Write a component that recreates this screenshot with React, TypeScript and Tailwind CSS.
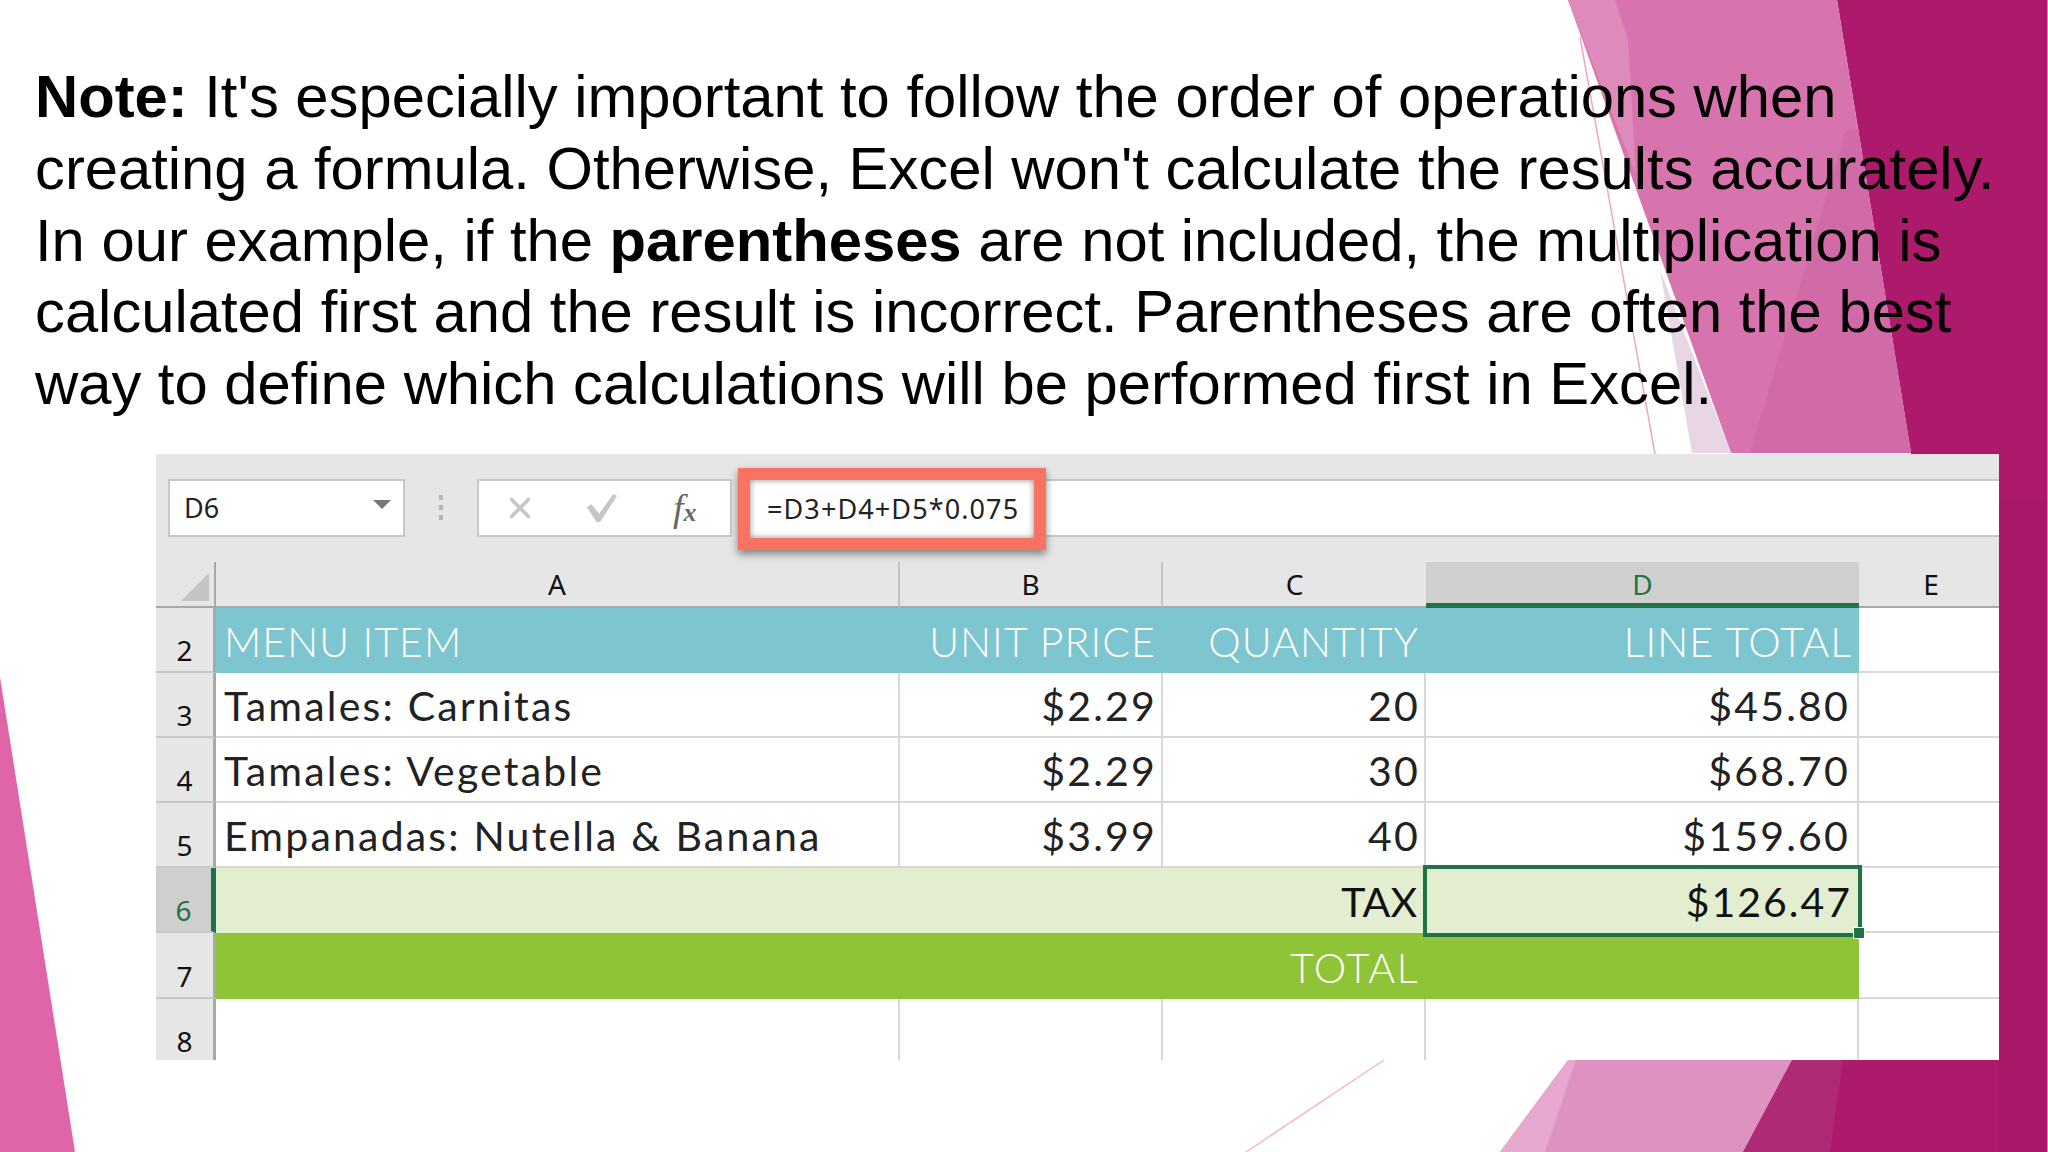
import React from 'react';
import { X } from 'lucide-react';

const headFont = "font-['Noto_Sans','Open_Sans',sans-serif]";
const cellFont = "font-['Lato',sans-serif]";

type Row = {
  n: number;
  kind: 'plain' | 'head' | 'tax' | 'total';
  cells: string[];
};

const rows: Row[] = [
  { n: 2, kind: 'head', cells: ['MENU ITEM', 'UNIT PRICE', 'QUANTITY', 'LINE TOTAL', ''] },
  { n: 3, kind: 'plain', cells: ['Tamales: Carnitas', '$2.29', '20', '$45.80', ''] },
  { n: 4, kind: 'plain', cells: ['Tamales: Vegetable', '$2.29', '30', '$68.70', ''] },
  { n: 5, kind: 'plain', cells: ['Empanadas: Nutella & Banana', '$3.99', '40', '$159.60', ''] },
  { n: 6, kind: 'tax', cells: ['', '', 'TAX', '$126.47', ''] },
  { n: 7, kind: 'total', cells: ['', '', 'TOTAL', '', ''] },
  { n: 8, kind: 'plain', cells: ['', '', '', '', ''] },
];

const columns = [
  { label: 'A', w: 'w-[684px]' },
  { label: 'B', w: 'w-[263px]' },
  { label: 'C', w: 'w-[263px]' },
  { label: 'D', w: 'w-[433px]' },
  { label: 'E', w: 'flex-1' },
];

function Backdrop() {
  return (
    <svg className="absolute inset-0" width="2048" height="1152" viewBox="0 0 2048 1152">
      <polygon points="0,677 75,1152 0,1152" fill="#e065a8" />
      <polygon points="1837,0 2048,0 2048,1152 1743,1152 1792,1060 1911,453" fill="#ad1a6c" />
      <polygon points="1999,500 2048,500 2048,1152 1999,1152" fill="#a91868" />
      <polygon points="1568,0 1837,0 1911,453 1731,453" fill="#d874ad" />
      <polygon points="1568,0 1615,0 1628,40 1636,175" fill="#de8aba" />
      <polygon points="1846,130 1750,453 1911,453 1858,130" fill="#d16ba8" />
      <polygon points="1660,270 1731,453 1692,453" fill="#e9d6e5" />
      <polygon points="1568,1060 1792,1060 1743,1152 1500,1152" fill="#de92bf" />
      <polygon points="1568,1060 1576,1060 1545,1152 1500,1152" fill="#e6a8cf" />
      <polygon points="1792,1060 1843,1060 1830,1152 1743,1152" fill="#ae2a75" />
      <line x1="1580" y1="37" x2="1655" y2="454" stroke="#f0a6c6" strokeWidth="1.5" />
      <line x1="1384" y1="1060" x2="1246" y2="1152" stroke="#f4b4cd" strokeWidth="1.5" />
      <line x1="2047.5" y1="0" x2="2047.5" y2="1152" stroke="#d884b0" strokeWidth="1" />
    </svg>
  );
}

function FormulaBar() {
  return (
    <div className="flex h-[108px] pt-[25px] items-start">
      <div className={`ml-[12px] w-[237px] h-[58px] bg-white border-2 border-[#c8c8c8] flex items-center justify-between pl-[14px] pr-[12px] text-[27px] text-[#222] ${headFont}`}>
        D6
        <span className="w-0 h-0 border-x-[9px] border-x-transparent border-t-[9px] border-t-[#777] -mt-[6px]" />
      </div>
      <div className="w-[72px] h-[58px] flex flex-col items-center justify-center gap-[5px]">
        <span className="w-[4px] h-[5px] bg-[#b5b5b5]" />
        <span className="w-[4px] h-[5px] bg-[#b5b5b5]" />
        <span className="w-[4px] h-[5px] bg-[#b5b5b5]" />
      </div>
      <div className="w-[255px] h-[58px] bg-white border-2 border-[#c8c8c8] flex items-center pl-[24px]">
        <X className="w-[34px] h-[34px] text-[#c6c6c6]" strokeWidth={2.5} />
        <svg className="ml-[49px]" width="32" height="30" viewBox="0 0 34 30">
          <polygon points="1,14 6,11 14,21 29,0 33,2 15,30 11,30" fill="#c6c6c6" />
        </svg>
        <span className="ml-[55px] leading-none italic text-[#666] font-['Liberation_Serif',serif] text-[38px]">
          f<span className="text-[26px] font-semibold">x</span>
        </span>
      </div>
      <div className="relative flex-1 ml-[6px] h-[58px] bg-white border-y-2 border-[#c8c8c8]">
        <div className={`absolute -top-[13px] left-0 w-[308px] h-[82px] bg-white border-[12px] border-[#f97362] shadow-[0_4px_8px_rgba(0,0,0,0.45),inset_0_0_6px_rgba(0,0,0,0.45)] flex items-center pl-[17px] text-[27px] tracking-[1.1px] text-[#222] ${headFont}`}>
          =D3+D4+D5*0.075
        </div>
      </div>
    </div>
  );
}

function ColumnHeaders() {
  return (
    <div className={`flex h-[46px] text-[28px] text-[#111] ${headFont}`}>
      <div className="w-[60px] relative border-b-2 border-r-2 border-[#a8a8a8]">
        <span className="absolute right-[5px] bottom-[5px] w-0 h-0 border-l-[28px] border-l-transparent border-b-[28px] border-b-[#c4c4c4]" />
      </div>
      {columns.map((c) => {
        const active = c.label === 'D';
        return (
          <div
            key={c.label}
            className={`${c.w} flex items-center justify-center ${
              active
                ? 'bg-[#cfcfcf] border-b-[5px] border-[#217346] text-[#217346] pt-[3px]'
                : 'border-b-2 border-[#a8a8a8]'
            } ${c.label === 'A' || c.label === 'B' ? 'border-r-2 border-r-[#c4c4c4]' : ''} ${c.label === 'E' ? 'pl-[4px]' : ''}`}
          >
            {c.label}
          </div>
        );
      })}
    </div>
  );
}

function cellPadding(kind: Row['kind'], label: string, text: string) {
  if (text === 'TAX') return 'pr-[9px]';
  if (kind === 'head' || kind === 'total') return 'pr-[7px]';
  return label === 'D' ? 'pr-[7px]' : 'pr-[4px]';
}

function SheetRow({ row, height }: { row: Row; height: string }) {
  const rowBg =
    row.kind === 'head' ? 'bg-[#7dc6d0] text-white font-light tracking-[1.1px]'
    : row.kind === 'tax' ? 'bg-[#e3eed0] text-[#111] tracking-[2px]'
    : row.kind === 'total' ? 'bg-[#8fc436] text-white font-light tracking-[1.5px]'
    : 'text-[#222] tracking-[2.2px]';
  const lines = row.kind === 'plain';
  const last = row.n === 8;
  return (
    <div className={`flex ${height}`}>
      <div
        className={`w-[60px] shrink-0 flex items-end justify-center text-[28px] leading-[30px] ${last ? 'pb-[8px]' : 'pb-[6px]'} ${headFont} ${
          last ? '' : 'border-b-2 border-b-[#c8c8c8]'
        } ${
          row.kind === 'tax'
            ? 'bg-[#cfcfcf] text-[#217346] border-r-[5px] border-r-[#217346]'
            : 'bg-[#e6e6e6] text-[#111] border-r-[3px] border-r-[#a8a8a8]'
        }`}
      >
        {row.n}
      </div>
      {columns.map((c, i) => {
        const isE = c.label === 'E';
        const text = row.cells[i];
        return (
          <div
            key={c.label}
            className={`${c.w} relative flex items-center pl-[8px] pt-[3px] text-[41px] whitespace-nowrap ${cellFont} ${cellPadding(row.kind, c.label, text)} ${
              isE ? (last ? 'bg-white' : 'bg-white border-b-2 border-[#d8d8d8]') : rowBg
            } ${i === 0 ? 'justify-start' : 'justify-end'} ${
              lines && !isE ? `border-r-2 border-r-[#d8d8d8] ${last ? '' : 'border-b-2 border-b-[#d8d8d8]'}` : ''
            } ${text === 'TAX' ? 'tracking-normal' : ''}`}
          >
            {text}
            {row.kind === 'tax' && c.label === 'D' && (
              <>
                <span className="absolute z-10 -left-[3px] -right-[3px] -top-[3px] -bottom-[4px] border-[4px] border-[#217346]" />
                <span className="absolute z-10 -right-[6px] -bottom-[6px] w-[12px] h-[12px] bg-[#217346] border border-white" />
              </>
            )}
          </div>
        );
      })}
    </div>
  );
}

export default function App() {
  return (
    <div className="relative w-[2048px] h-[1152px] bg-white overflow-hidden font-['Liberation_Sans',Arial,sans-serif]">
      <Backdrop />
      <div className="relative pt-[61px]">
        <p className="pl-[35px] text-[59.75px] leading-[71.8px] text-black whitespace-nowrap">
          <b>Note:</b> It's especially important to follow the order of operations when<br />
          creating a formula. Otherwise, Excel won't calculate the results accurately.<br />
          In our example, if the <b>parentheses</b> are not included, the multiplication is<br />
          calculated first and the result is incorrect. Parentheses are often the best<br />
          way to define which calculations will be performed first in Excel.
        </p>
        <div className="ml-[156px] mt-[34px] w-[1843px] h-[606px] bg-white overflow-hidden">
          <div className="bg-[#e6e6e6]">
            <FormulaBar />
            <ColumnHeaders />
          </div>
          {rows.map((r) => (
            <SheetRow key={r.n} row={r} height={r.n === 7 ? 'h-[66px]' : 'h-[65px]'} />
          ))}
        </div>
      </div>
    </div>
  );
}
